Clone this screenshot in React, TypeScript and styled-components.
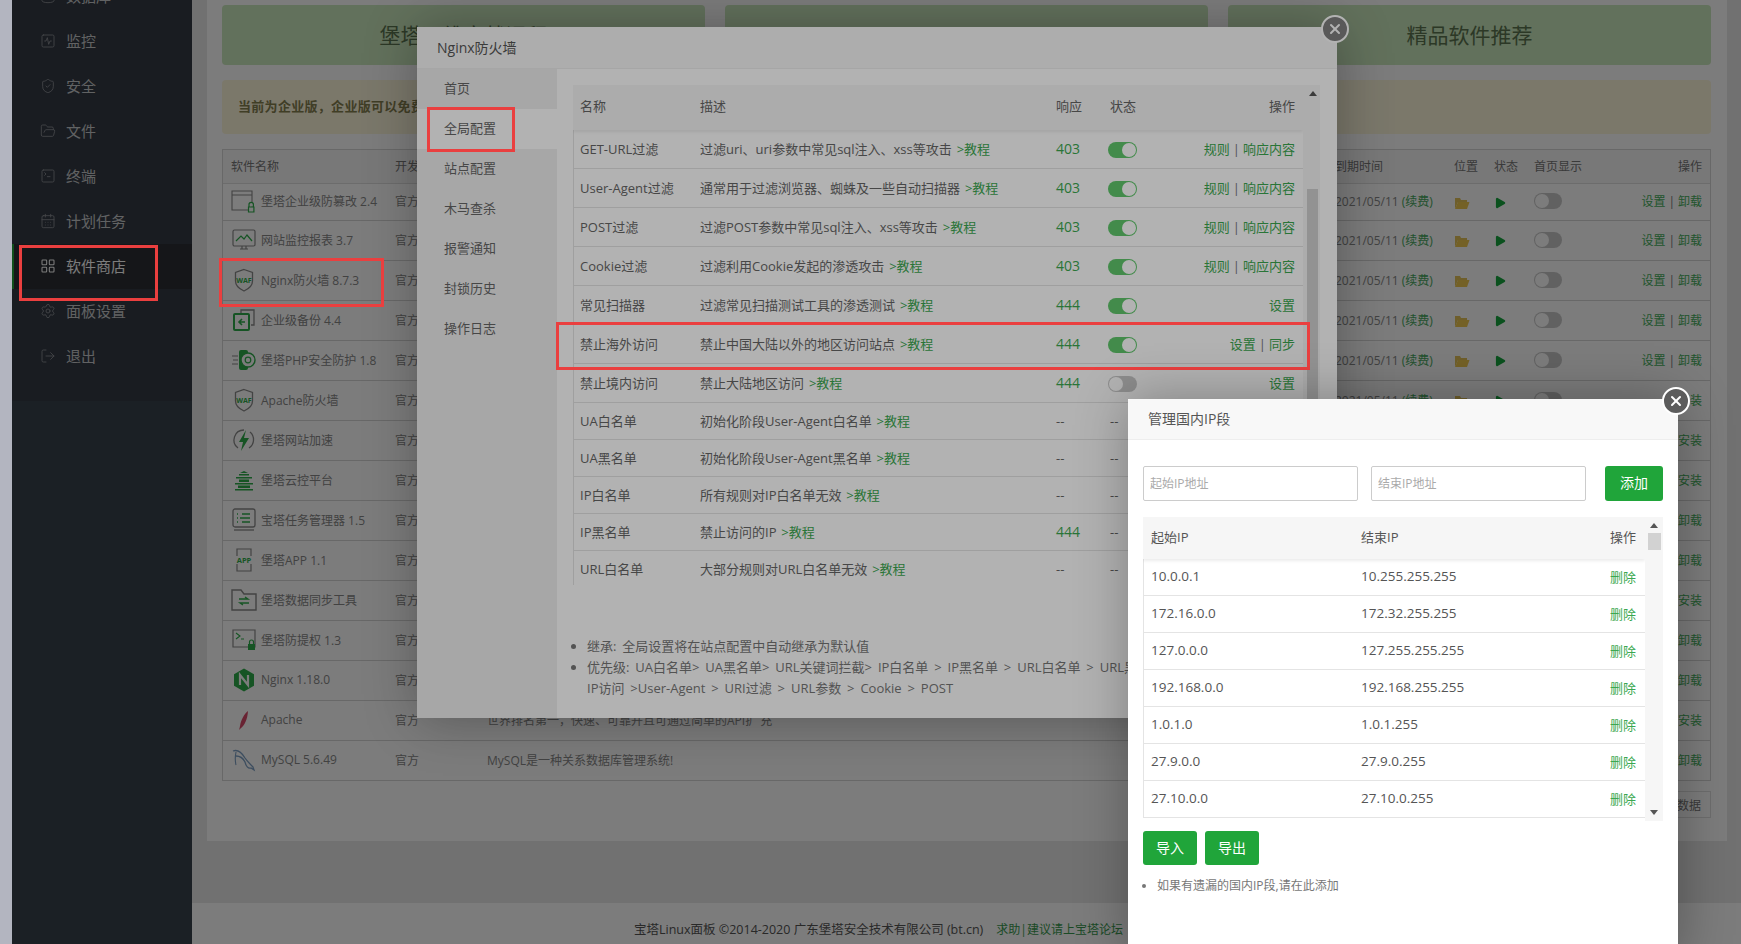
import React from "react";
import styled, { createGlobalStyle } from "styled-components";
import { SquareActivity, ShieldCheck, FolderOpen, SquareTerminal, CalendarDays, LayoutGrid, Settings, LogOut, Database, X, Play } from "lucide-react";

const Global = createGlobalStyle`
  html, body { margin: 0; padding: 0; height: 100%; overflow: hidden; }
  body { font-family: "Open Sans", "Noto Sans CJK SC", sans-serif; font-size: 12px; background: #b3b5c0; }
  * { box-sizing: border-box; }
`;

const Page = styled.div`
  position: relative; height: 944px; width: 1741px; overflow: hidden; display: flex;
`;
const Stripe = styled.div`flex: 0 0 12px; background: #b3b5c0;`;
const Side = styled.aside`flex: 0 0 180px; background: #39434d; overflow: hidden;`;
const Nav = styled.nav`margin-top: -26px; background: #353b46; padding-bottom: 22px;`;
const NavItem = styled.div<{ $active?: boolean }>`
  height: 45px; display: flex; align-items: center; gap: 10px; padding: 0 0 2px ${p => (p.$active ? 26 : 28)}px;
  font-size: 15px; color: ${p => (p.$active ? "#ffffff" : "#c8cacc")};
  background: ${p => (p.$active ? "#2d2f35" : "transparent")};
  border-left: ${p => (p.$active ? "2px solid #20a53a" : "none")};
  svg { flex: none; opacity: ${p => (p.$active ? 1 : 0.6)}; }
`;
const Main = styled.main`flex: 1; display: flex; flex-direction: column; background: #e9e9e9; padding: 0 14px 0 15px; min-width: 0;`;
const Panel = styled.section`background: #fff; padding: 5px 16px 23px 15px;`;
const Banners = styled.div`display: grid; grid-template-columns: repeat(3, 483px); gap: 20px;`;
const Banner = styled.div`
  height: 60px; background: #cbe8bd; border-radius: 4px; display: flex; align-items: center; justify-content: center;
  font-size: 21px; padding-bottom: 2px; color: #5b7550;
`;
const Alert = styled.div`
  margin-top: 15px; height: 54px; background: #fdf6dc; border-radius: 4px; display: flex; align-items: center;
  padding: 0 0 3px 16px; font-size: 13px; font-weight: 700; letter-spacing: 0.3px; color: #85804f;
`;
const Table = styled.div`margin-top: 15px; border: 1px solid #d6d6d6; border-bottom: none;`;
const softColumns = "164px 92px 848px 119px 40px 40px 60px 1fr";
const HeadRow = styled.div`
  height: 34px; display: grid; grid-template-columns: ${softColumns}; align-items: center; padding: 0 8px 2px;
  background: #f6f6f6; border-bottom: 1px solid #dedede; color: #777;
`;
const Row = styled.div<{ $first?: boolean }>`
  height: ${p => (p.$first ? 37 : 40)}px; display: grid; grid-template-columns: ${softColumns}; align-items: center; padding: 0 8px 2px;
  border-bottom: 1px solid #d6d6d6; color: #888;
`;
const NameCell = styled.div`display: flex; align-items: center; gap: 4px; white-space: nowrap;`;
const IconBox = styled.span`flex: 0 0 26px; height: 26px; display: flex; align-items: center; justify-content: center;`;
const Cell = styled.div<{ $right?: boolean }>`white-space: nowrap; text-align: ${p => (p.$right ? "right" : "left")};`;
const Renew = styled.span`color: #48a860; font-size: 12px;`;
const OpLink = styled.span`color: #48b060;`;
const Sep = styled.span`color: #777; margin: 0 3px;`;
const FolderIcon = styled.svg`display: block; margin-top: 3px;`;
const PlaySvg = styled.span`display: flex; margin: 3px 0 0 -1px; color: #18a840;`;
const Toggle = styled.span<{ $on?: boolean }>`
  display: block; width: 29px; height: 16px; border-radius: 8px; position: relative;
  margin: 2px 0 0 -2px;
  background: ${p => (p.$on ? "#60c86c" : "#c9c9c9")};
  &::after {
    content: ""; position: absolute; top: 1px; width: 14px; height: 14px; border-radius: 50%; background: #fff;
    ${p => (p.$on ? "right: 1px;" : "left: 1px;")}
  }
`;
const HomeToggle = styled(Toggle)`width: 28px; margin: 0;`;
const Pager = styled.div`margin-top: 10px; display: flex; justify-content: flex-end;`;
const PagerBtn = styled.div`height: 27px; border: 1px solid #e0e0e0; padding: 0 9px; display: flex; align-items: center; font-size: 12px; color: #777;`;
const Spacer = styled.div`flex: 1;`;
const Footer = styled.footer`
  height: 41px; margin: 0 -14px 0 -15px; background: #fff; padding: 17px 0 0 442px; display: flex; gap: 13px;
  line-height: 20px; font-size: 12.5px; color: #555; white-space: nowrap;
`;
const FooterLink = styled.span`font-size: 12px; color: #3a9a50;`;

const Shade = styled.div`position: absolute; left: 12px; top: 0; right: 0; bottom: 0; background: rgba(0, 0, 0, 0.3);`;
const Window = styled.div<{ $x: number; $y: number; $w: number; $h: number }>`
  position: absolute; left: ${p => p.$x}px; top: ${p => p.$y}px; width: ${p => p.$w}px; height: ${p => p.$h}px;
  background: #fff; box-shadow: 1px 1px 50px rgba(0, 0, 0, 0.3); display: flex; flex-direction: column;
`;
const TitleBar = styled.div<{ $h: number }>`
  flex: 0 0 ${p => p.$h}px; background: #f8f8f8; border-bottom: 1px solid #eee; padding: 0 0 2px 20px;
  display: flex; align-items: center; font-size: 14px; color: #555;
`;
const CloseBtn = styled.div<{ $x: number; $y: number; $fill: string }>`
  position: absolute; left: ${p => p.$x}px; top: ${p => p.$y}px; width: 28px; height: 28px; border-radius: 50%;
  background: ${p => p.$fill}; border: 2px solid #fff; color: #fff; display: flex; align-items: center; justify-content: center;
`;
const Body = styled.div`flex: 1; display: flex; min-height: 0;`;
const TabList = styled.div`flex: 0 0 140px; background: #f0f0f0;`;
const Tab = styled.div<{ $active?: boolean }>`
  height: 40px; padding: 0 0 3px 27px; display: flex; align-items: center; font-size: 13px; color: #666;
  background: ${p => (p.$active ? "#fff" : "transparent")};
`;
const TabBody = styled.div`flex: 1; padding: 16px 17px 0 16px; min-width: 0;`;
const ScrollWrap = styled.div<{ $h: number }>`height: ${p => p.$h}px; display: flex; overflow: hidden;`;
const RuleTable = styled.div`flex: 1; min-width: 0;`;
const ruleColumns = "120px 356px 54px 1fr auto";
const RuleHead = styled.div`
  position: relative; height: 45px; display: grid; grid-template-columns: ${ruleColumns}; align-items: center;
  padding: 0 8px 5px 7px; background: #f6f6f6; font-size: 13px; color: #666; box-shadow: 0 2px 3px rgba(0, 0, 0, 0.08);
`;
const RuleRow = styled.div<{ $tall?: boolean }>`
  height: ${p => (p.$tall ? 39 : 37)}px; display: grid; grid-template-columns: ${ruleColumns}; align-items: center;
  padding: 0 8px 1px 6px; border-left: 1px solid #e4e4e4; border-bottom: 1px solid #e4e4e4; font-size: 13px; color: #666;
  white-space: nowrap; word-spacing: 1.5px;
`;
const Green = styled.span`color: #3ba850;`;
const Code = styled.span`font-size: 14px; color: #3ba850;`;
const Bar = styled.div<{ $w: number }>`
  flex: 0 0 ${p => p.$w}px; background: #f6f6f6; position: relative;
`;
const Thumb = styled.div<{ $l: number; $t: number; $h?: number }>`
  position: absolute; left: ${p => p.$l}px; right: 2px; top: ${p => p.$t}px;
  ${p => (p.$h ? `height: ${p.$h}px;` : "bottom: 0;")} background: #d2d2d2;
`;
const Arrow = styled.div<{ $up?: boolean; $l: number; $t?: number; $bottom?: number }>`
  position: absolute; left: ${p => p.$l}px; ${p => (p.$t !== undefined ? `top: ${p.$t}px;` : `bottom: ${p.$bottom}px;`)}
  width: 0; height: 0; border-left: 4px solid transparent; border-right: 4px solid transparent;
  ${p => (p.$up ? "border-bottom: 5px solid #555;" : "border-top: 5px solid #555;")}
`;
const Notes = styled.ul<{ $mt: number; $size: number; $lh: number; $ws?: number }>`
  margin: ${p => p.$mt}px 0 0; padding: 0 0 0 14px; font-size: ${p => p.$size}px; line-height: ${p => p.$lh}px; color: #777;
  white-space: nowrap; word-spacing: ${p => p.$ws ?? 0}px;
`;
const Form = styled.div`display: flex; gap: 13px;`;
const Input = styled.input`
  width: 215px; height: 35px; border: 1px solid #ccc; border-radius: 2px; padding: 0 6px; font: inherit; font-size: 12px; outline: none;
  &::placeholder { color: #aaa; }
`;
const GreenBtn = styled.div<{ $w: number; $h: number; $auto?: boolean }>`
  width: ${p => p.$w}px; height: ${p => p.$h}px; background: #20a53a; color: #fff; border-radius: 3px; font-size: 14px; padding-bottom: 3px;
  display: flex; align-items: center; justify-content: center; ${p => (p.$auto ? "margin-left: auto;" : "")}
`;
const Form2Body = styled.div`flex: 1; padding: 26px 15px 0;`;
const IpWrap = styled(ScrollWrap)`margin-top: 16px;`;
const ipColumns = "210px 1fr auto";
const IpHead = styled.div`
  position: relative; height: 42px; display: grid; grid-template-columns: ${ipColumns}; align-items: center;
  padding: 0 9px 4px 8px; background: #f6f6f6; font-size: 13px; color: #555; box-shadow: 0 2px 3px rgba(0, 0, 0, 0.08);
`;
const IpRow = styled.div`
  height: 37px; display: grid; grid-template-columns: ${ipColumns}; align-items: center; padding: 0 9px 2px 7px;
  border-left: 1px solid #e4e4e4; border-bottom: 1px solid #e4e4e4; font-size: 13.5px; color: #555;
`;
const DelLink = styled.span`font-size: 13px; color: #3ba850;`;
const BtnRow = styled.div`display: flex; gap: 8px; margin-top: 10px;`;
const Mark = styled.div<{ $x: number; $y: number; $w: number; $h: number }>`
  position: absolute; left: ${p => p.$x}px; top: ${p => p.$y}px; width: ${p => p.$w}px; height: ${p => p.$h}px;
  border: 3px solid #ea3f3f;
`;

const G = "#2fae4b";
const K = "#8a8a8a";
const Ico = ({ n }: { n: number }) => {
  const p = { width: 26, height: 26, viewBox: "0 0 26 26", fill: "none" } as const;
  const waf = (
    <svg {...p}>
      <path d="M13 2.5l8.5 3v8.5c0 5-4 8-8.5 10-4.5-2-8.5-5-8.5-10V5.5z" stroke={K} strokeWidth="1.3" />
      <text x="13" y="15.5" textAnchor="middle" fontSize="7" fontWeight="700" fill={G} fontFamily="Open Sans">WAF</text>
    </svg>
  );
  switch (n) {
    case 0: return <svg {...p}><path d="M1 3h20v19H1zM1 7h20" stroke={K} strokeWidth="1.1" /><path d="M18 18.5v-2a2.2 2.2 0 014.4 0v2M17.5 19h5.4v5h-5.4z" stroke={G} strokeWidth="1.2" fill="#fff" /></svg>;
    case 1: return <svg {...p}><rect x="2" y="3" width="22" height="16" rx="1.5" stroke={K} strokeWidth="1.2" /><path d="M5 14l5-5 3 3 3-4 5 6" stroke={G} strokeWidth="1.2" /><path d="M9 22h8M11 19v3M15 19v3" stroke={K} strokeWidth="1.2" /></svg>;
    case 2: case 5: return waf;
    case 3: return <svg {...p}><path d="M10 6V3h13v15h-3" stroke={K} strokeWidth="1.3" /><rect x="3" y="7" width="15" height="16" rx="1" stroke={G} strokeWidth="2" /><path d="M14 15H8m3-3l-3 3 3 3" stroke={G} strokeWidth="1.6" /></svg>;
    case 4: return <svg {...p}><path d="M1 9h6M2 13h5M1 17h6" stroke={K} strokeWidth="1.2" /><rect x="8" y="3" width="9" height="20" rx="2" fill={G} /><circle cx="17" cy="13" r="7" fill="#fff" stroke={G} strokeWidth="1.4" /><circle cx="17" cy="13" r="2.8" stroke={G} strokeWidth="1.2" /></svg>;
    case 6: return <svg {...p}><path d="M7 21A10 10 0 0113 3M19 5a10 10 0 01-1 16" stroke={K} strokeWidth="1.3" /><path d="M15 3l-7 12h4l-2 9 8-13h-5z" fill={G} /></svg>;
    case 7: return <svg {...p}><path d="M13 1v3M9 6l4-2 4 2zM8 7h10v1.5H8zM5 10h16v1.5H5zM8 12.5h10V15H8zM4 16h18v1.5H4zM7 18.5h12V21H7zM4 22h18v1.5H4z" fill={G} /></svg>;
    case 8: return <svg {...p}><rect x="2" y="2" width="22" height="18" rx="2" stroke={K} strokeWidth="1.3" /><path d="M11 7h8M9 11h10M11 15h8M6 7h1M6 11h1M6 15h1" stroke={G} strokeWidth="1.3" /><path d="M3 23h20" stroke={K} strokeWidth="1.3" /></svg>;
    case 9: return <svg {...p}><path d="M6 9V2h14v7M6 17v7h14v-7" stroke={K} strokeWidth="1.2" /><text x="13" y="16" textAnchor="middle" fontSize="7.5" fontWeight="700" fill={G} fontFamily="Open Sans">APP</text></svg>;
    case 10: return <svg {...p}><path d="M1 3h9l3 4h12v16H1z" stroke={K} strokeWidth="1.4" /><path d="M8 12h9l-3-2M18 16H9l3 2" stroke={G} strokeWidth="1.3" /></svg>;
    case 11: return <svg {...p}><path d="M2 3h22v17H2z" stroke={K} strokeWidth="1.2" /><path d="M5 6l4 3-4 3M10 12h3" stroke={G} strokeWidth="1.1" /><rect x="17" y="17" width="7" height="6" fill={G} /><path d="M18.5 17v-2a2 2 0 014 0v2" stroke={G} strokeWidth="1.2" /></svg>;
    case 12: return <svg {...p}><path d="M13 1.5l10 5.7v11.6l-10 5.7-10-5.7V7.2z" fill={G} /><path d="M9 18V8l8 10V8" stroke="#fff" strokeWidth="2.2" /></svg>;
    case 13: return <svg {...p}><path d="M17 4c-4 3-7 9-8 15-.3 2-1 4-1 4l1.5-1.5c4-3 7-9 7.5-17.5z" fill="#d84a6a" /></svg>;
    default: return <svg {...p}><path d="M2 4c5-2 9 2 12 7 2 3 4 5 8 9l1 3-3-2c-3 1-5-2-6-6-2-4-5-6-9-6" stroke="#7ea0c4" strokeWidth="1.3" /><path d="M5 5c-1 5-1 9 0 13" stroke="#7ea0c4" strokeWidth="1.1" /></svg>;
  }
};

const soft: [string, string, boolean][] = [
  ["堡塔企业级防篡改 2.4", "事件型防篡改程序，可有效保护网站重要文件不被木马篡改", true],
  ["网站监控报表 3.7", "快速分析网站运行状况，实时精确统计网站流量", true],
  ["Nginx防火墙 8.7.3", "有效防护常见网站攻击，提供多种防御规则", true],
  ["企业级备份 4.4", "增量备份网站和数据库，支持定时任务", true],
  ["堡塔PHP安全防护 1.8", "PHP安全防护，防止恶意脚本执行", true],
  ["Apache防火墙", "有效防护常见网站攻击", false],
  ["堡塔网站加速", "提升网站访问速度", false],
  ["堡塔云控平台", "集中管理多台服务器", false],
  ["宝塔任务管理器 1.5", "进程、网络、启动项管理", true],
  ["堡塔APP 1.1", "手机管理服务器", true],
  ["堡塔数据同步工具", "多服务器数据同步", false],
  ["堡塔防提权 1.3", "防止系统被提权", true],
  ["Nginx 1.18.0", "轻量级，占有内存少，并发能力强", true],
  ["Apache", "世界排名第一，快速、可靠并且可通过简单的API扩 充", false],
  ["MySQL 5.6.49", "MySQL是一种关系数据库管理系统!", true],
];

const rules: [string, string, string, boolean | null, string[]][] = [
  ["GET-URL过滤", "过滤uri、uri参数中常见sql注入、xss等攻击", "403", true, ["规则", "响应内容"]],
  ["User-Agent过滤", "通常用于过滤浏览器、蜘蛛及一些自动扫描器", "403", true, ["规则", "响应内容"]],
  ["POST过滤", "过滤POST参数中常见sql注入、xss等攻击", "403", true, ["规则", "响应内容"]],
  ["Cookie过滤", "过滤利用Cookie发起的渗透攻击", "403", true, ["规则", "响应内容"]],
  ["常见扫描器", "过滤常见扫描测试工具的渗透测试", "444", true, ["设置"]],
  ["禁止海外访问", "禁止中国大陆以外的地区访问站点", "444", true, ["设置", "同步"]],
  ["禁止境内访问", "禁止大陆地区访问", "444", false, ["设置"]],
  ["UA白名单", "初始化阶段User-Agent白名单", "--", null, []],
  ["UA黑名单", "初始化阶段User-Agent黑名单", "--", null, []],
  ["IP白名单", "所有规则对IP白名单无效", "--", null, []],
  ["IP黑名单", "禁止访问的IP", "444", null, []],
  ["URL白名单", "大部分规则对URL白名单无效", "--", null, []],
];

const ips: [string, string][] = [
  ["10.0.0.1", "10.255.255.255"], ["172.16.0.0", "172.32.255.255"], ["127.0.0.0", "127.255.255.255"],
  ["192.168.0.0", "192.168.255.255"], ["1.0.1.0", "1.0.1.255"], ["27.9.0.0", "27.9.0.255"], ["27.10.0.0", "27.10.0.255"],
];

const nav: [React.ReactNode, string, boolean?][] = [
  [<Database size={16} strokeWidth={1.3} />, "数据库"],
  [<SquareActivity size={16} strokeWidth={1.3} />, "监控"],
  [<ShieldCheck size={16} strokeWidth={1.3} />, "安全"],
  [<FolderOpen size={16} strokeWidth={1.3} />, "文件"],
  [<SquareTerminal size={16} strokeWidth={1.3} />, "终端"],
  [<CalendarDays size={16} strokeWidth={1.3} />, "计划任务"],
  [<LayoutGrid size={16} strokeWidth={1.6} />, "软件商店", true],
  [<Settings size={16} strokeWidth={1.3} />, "面板设置"],
  [<LogOut size={16} strokeWidth={1.3} />, "退出"],
];

export default function App() {
  return (
    <Page>
      <Global />
      <Stripe />
      <Side>
        <Nav>
          {nav.map(([icon, label, active]) => (
            <NavItem key={label} $active={active}>{icon}{label}</NavItem>
          ))}
        </Nav>
      </Side>
      <Main>
        <Panel>
          <Banners>
            <Banner>堡塔运维实战课程</Banner>
            <Banner />
            <Banner>精品软件推荐</Banner>
          </Banners>
          <Alert>当前为企业版，企业版可以免费使用专业版及企业版插件，到期时间：2021/05/11</Alert>
          <Table>
            <HeadRow>
              <Cell>软件名称</Cell><Cell>开发商</Cell><Cell>说明</Cell><Cell>到期时间</Cell>
              <Cell>位置</Cell><Cell>状态</Cell><Cell>首页显示</Cell><Cell $right>操作</Cell>
            </HeadRow>
            {soft.map(([name, desc, installed], i) => (
              <Row key={name} $first={i === 0}>
                <NameCell><IconBox><Ico n={i} /></IconBox>{name}</NameCell>
                <Cell>官方</Cell>
                <Cell>{desc}</Cell>
                <Cell>2021/05/11 <Renew>(续费)</Renew></Cell>
                <Cell>
                  <FolderIcon width="16" height="14" viewBox="0 0 16 14">
                    <path d="M1 2h5l1 2h6v2H4L1 13z" fill="#e3c25a" /><path d="M4 6h11.5L13 13H1z" fill="#f0c850" />
                  </FolderIcon>
                </Cell>
                <Cell><PlaySvg><Play size={14} fill="currentColor" strokeWidth={0} /></PlaySvg></Cell>
                <Cell><HomeToggle /></Cell>
                <Cell $right>
                  {installed ? <><OpLink>设置</OpLink><Sep>|</Sep><OpLink>卸载</OpLink></> : <OpLink>安装</OpLink>}
                </Cell>
              </Row>
            ))}
          </Table>
          <Pager><PagerBtn>更新数据</PagerBtn></Pager>
        </Panel>
        <Spacer />
        <Footer>
          <span>宝塔Linux面板 ©2014-2020 广东堡塔安全技术有限公司 (bt.cn)</span>
          <FooterLink>求助|建议请上宝塔论坛</FooterLink>
        </Footer>
      </Main>

      <Shade />
      <Window $x={417} $y={27} $w={920} $h={691}>
        <TitleBar $h={42}>Nginx防火墙</TitleBar>
        <Body>
          <TabList>
            {["首页", "全局配置", "站点配置", "木马查杀", "报警通知", "封锁历史", "操作日志"].map((t, i) => (
              <Tab key={t} $active={i === 1}>{t}</Tab>
            ))}
          </TabList>
          <TabBody>
            <ScrollWrap $h={500}>
              <RuleTable>
                <RuleHead><span>名称</span><span>描述</span><span>响应</span><span>状态</span><span>操作</span></RuleHead>
                {rules.map(([name, desc, code, on, ops]) => (
                  <RuleRow key={name} $tall={on !== null}>
                    <span>{name}</span>
                    <span>{desc} <Green>&gt;教程</Green></span>
                    {code === "--" ? <span>--</span> : <Code>{code}</Code>}
                    {on === null ? <span>--</span> : <Toggle $on={on} />}
                    <span>
                      {ops.map((o, i) => (
                        <React.Fragment key={o}>{i > 0 && <Sep>|</Sep>}<Green>{o}</Green></React.Fragment>
                      ))}
                    </span>
                  </RuleRow>
                ))}
              </RuleTable>
              <Bar $w={17}>
                <Arrow $up $l={6} $t={6} />
                <Thumb $l={4} $t={104} />
              </Bar>
            </ScrollWrap>
            <Notes $mt={51} $size={13} $lh={21} $ws={2.5}>
              <li>继承: 全局设置将在站点配置中自动继承为默认值</li>
              <li>优先级: UA白名单&gt; UA黑名单&gt; URL关键词拦截&gt; IP白名单 &gt; IP黑名单 &gt; URL白名单 &gt; URL黑名单 &gt;<br />IP访问 &gt;User-Agent &gt; URI过滤 &gt; URL参数 &gt; Cookie &gt; POST</li>
            </Notes>
          </TabBody>
        </Body>
      </Window>
      <CloseBtn $x={1321} $y={15} $fill="#808080"><X size={16} strokeWidth={3} /></CloseBtn>
      <Shade />
      <Mark $x={19} $y={245} $w={139} $h={56} />
      <Mark $x={219} $y={258} $w={165} $h={49} />
      <Mark $x={427} $y={107} $w={88} $h={45} />
      <Mark $x={556} $y={322} $w={754} $h={48} />

      <Window $x={1128} $y={399} $w={550} $h={560}>
        <TitleBar $h={41}>管理国内IP段</TitleBar>
        <Form2Body>
          <Form>
            <Input placeholder="起始IP地址" />
            <Input placeholder="结束IP地址" />
            <GreenBtn $w={58} $h={35} $auto>添加</GreenBtn>
          </Form>
          <IpWrap $h={304}>
            <RuleTable>
              <IpHead><span>起始IP</span><span>结束IP</span><span>操作</span></IpHead>
              {ips.map(([a, b]) => (
                <IpRow key={a}><span>{a}</span><span>{b}</span><DelLink>删除</DelLink></IpRow>
              ))}
            </RuleTable>
            <Bar $w={18}>
              <Arrow $up $l={5} $t={6} />
              <Thumb $l={3} $t={16} $h={17} />
              <Arrow $l={5} $bottom={6} />
            </Bar>
          </IpWrap>
          <BtnRow>
            <GreenBtn $w={54} $h={34}>导入</GreenBtn>
            <GreenBtn $w={54} $h={34}>导出</GreenBtn>
          </BtnRow>
          <Notes $mt={12} $size={12} $lh={18}><li>如果有遗漏的国内IP段,请在此添加</li></Notes>
        </Form2Body>
      </Window>
      <CloseBtn $x={1662} $y={387} $fill="#5c5c5c"><X size={16} strokeWidth={3} /></CloseBtn>
    </Page>
  );
}
